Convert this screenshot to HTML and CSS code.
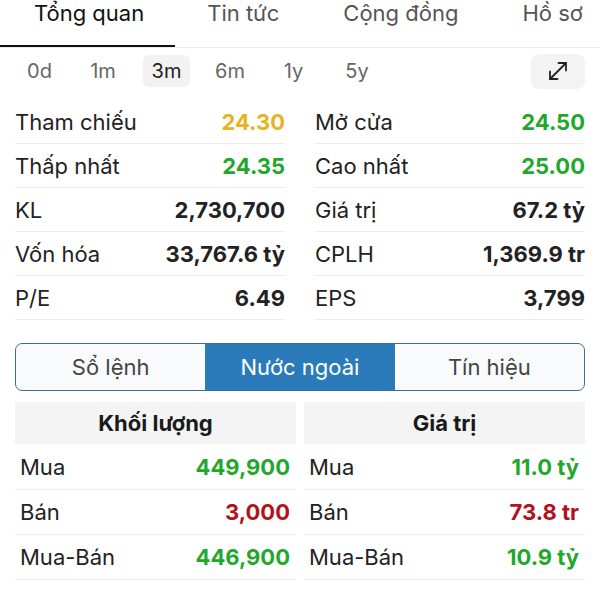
FILE: index.html
```html
<!DOCTYPE html>
<html lang="vi">
<head>
    <meta charset="UTF-8">
    <meta name="viewport" content="width=device-width, initial-scale=1.0">
    <title>Tổng quan</title>
    <link rel="stylesheet" href="styles.css">
</head>
<body>
    <nav class="tabs">
        <div class="tab active">Tổng quan</div>
        <div class="tab">Tin tức</div>
        <div class="tab">Cộng đồng</div>
        <div class="tab">Hồ sơ</div>
    </nav>

    <div class="periods">
        <div class="period">0d</div>
        <div class="period">1m</div>
        <div class="period active">3m</div>
        <div class="period">6m</div>
        <div class="period">1y</div>
        <div class="period">5y</div>
        <button class="expand">
            <svg width="24" height="24" viewBox="0 0 24 24" fill="none" stroke="#222" stroke-width="1.8" stroke-linecap="round" stroke-linejoin="round">
                <path d="M4 20 L20 4"/>
                <path d="M12.5 4 H20 V11.5"/>
                <path d="M4 12.5 V20 H11.5"/>
            </svg>
        </button>
    </div>

    <div class="stats">
        <div class="stat"><span class="label">Tham chiếu</span><span class="value ref">24.30</span></div>
        <div class="stat"><span class="label">Mở cửa</span><span class="value up">24.50</span></div>
        <div class="stat"><span class="label">Thấp nhất</span><span class="value up">24.35</span></div>
        <div class="stat"><span class="label">Cao nhất</span><span class="value up">25.00</span></div>
        <div class="stat"><span class="label">KL</span><span class="value">2,730,700</span></div>
        <div class="stat"><span class="label">Giá trị</span><span class="value">67.2 tỷ</span></div>
        <div class="stat"><span class="label">Vốn hóa</span><span class="value">33,767.6 tỷ</span></div>
        <div class="stat"><span class="label">CPLH</span><span class="value">1,369.9 tr</span></div>
        <div class="stat"><span class="label">P/E</span><span class="value">6.49</span></div>
        <div class="stat"><span class="label">EPS</span><span class="value">3,799</span></div>
    </div>

    <div class="segments">
        <div class="segment">Sổ lệnh</div>
        <div class="segment active">Nước ngoài</div>
        <div class="segment">Tín hiệu</div>
    </div>

    <div class="foreign">
        <div class="col">
            <div class="col-head">Khối lượng</div>
            <div class="row"><span class="label">Mua</span><span class="value up">449,900</span></div>
            <div class="row"><span class="label">Bán</span><span class="value down">3,000</span></div>
            <div class="row"><span class="label">Mua-Bán</span><span class="value up">446,900</span></div>
        </div>
        <div class="col">
            <div class="col-head">Giá trị</div>
            <div class="row"><span class="label">Mua</span><span class="value up">11.0 tỷ</span></div>
            <div class="row"><span class="label">Bán</span><span class="value down">73.8 tr</span></div>
            <div class="row"><span class="label">Mua-Bán</span><span class="value up">10.9 tỷ</span></div>
        </div>
    </div>
</body>
</html>
```

FILE: styles.css
```css
body {
    margin: 0;
    font-family: Inter, "Liberation Sans", Arial, sans-serif;
    color: #222;
    background-color: #fff;
}

.tabs {
    display: flex;
    height: 47px;
    border-bottom: 1px solid #eeeeee;
    overflow: hidden;
}

.tab {
    padding: 0 32px;
    font-size: 22px;
    line-height: 26px;
    color: #555;
    white-space: nowrap;
}

.tab.active {
    color: #111;
    height: 45px;
    border-bottom: 3px solid #111;
    padding: 0 31px 0 34px;
}

.periods {
    display: flex;
    align-items: center;
    gap: 16.5px;
    padding: 3px 15px 0 16px;
    height: 40px;
}

.period {
    width: 47px;
    height: 32px;
    line-height: 32px;
    text-align: center;
    font-size: 20px;
    color: #666;
    border-radius: 6px;
}

.period.active {
    background-color: #f2f2f2;
    color: #222;
}

.expand {
    margin-left: auto;
    width: 54px;
    height: 35px;
    border: none;
    border-radius: 8px;
    background-color: #f3f3f3;
    display: flex;
    align-items: center;
    justify-content: center;
    padding: 0;
}

.stats {
    display: grid;
    grid-template-columns: 1fr 1fr;
    column-gap: 30px;
    padding: 9px 15px 0;
}

.stat {
    display: flex;
    justify-content: space-between;
    align-items: center;
    height: 43px;
    border-bottom: 1px solid #ededed;
    font-size: 22px;
}

.label {
    color: #222;
}

.value {
    font-weight: 700;
    color: #222;
}

.value.ref {
    color: #e6b422;
}

.value.up {
    color: #1fa82b;
}

.value.down {
    color: #b3121c;
}

.segments {
    display: flex;
    margin: 23px 15px 0;
    height: 46px;
    border: 1.5px solid #3f6f8e;
    border-radius: 7px;
    overflow: hidden;
    background-color: #f8fafb;
}

.segment {
    flex: 1;
    display: flex;
    align-items: center;
    justify-content: center;
    font-size: 22px;
    color: #444;
}

.segment.active {
    background-color: #2b7bba;
    color: #fff;
}

.foreign {
    display: grid;
    grid-template-columns: 1fr 1fr;
    column-gap: 8px;
    padding: 11px 15px 0;
}

.col-head {
    height: 42px;
    line-height: 42px;
    text-align: center;
    background-color: #f4f4f4;
    font-size: 22px;
    font-weight: 700;
    color: #1a1a1a;
    margin-bottom: 1px;
}

.row {
    display: flex;
    justify-content: space-between;
    align-items: center;
    height: 44px;
    padding: 0 6px 0 5px;
    border-bottom: 1px solid #ededed;
    font-size: 22px;
}
```
